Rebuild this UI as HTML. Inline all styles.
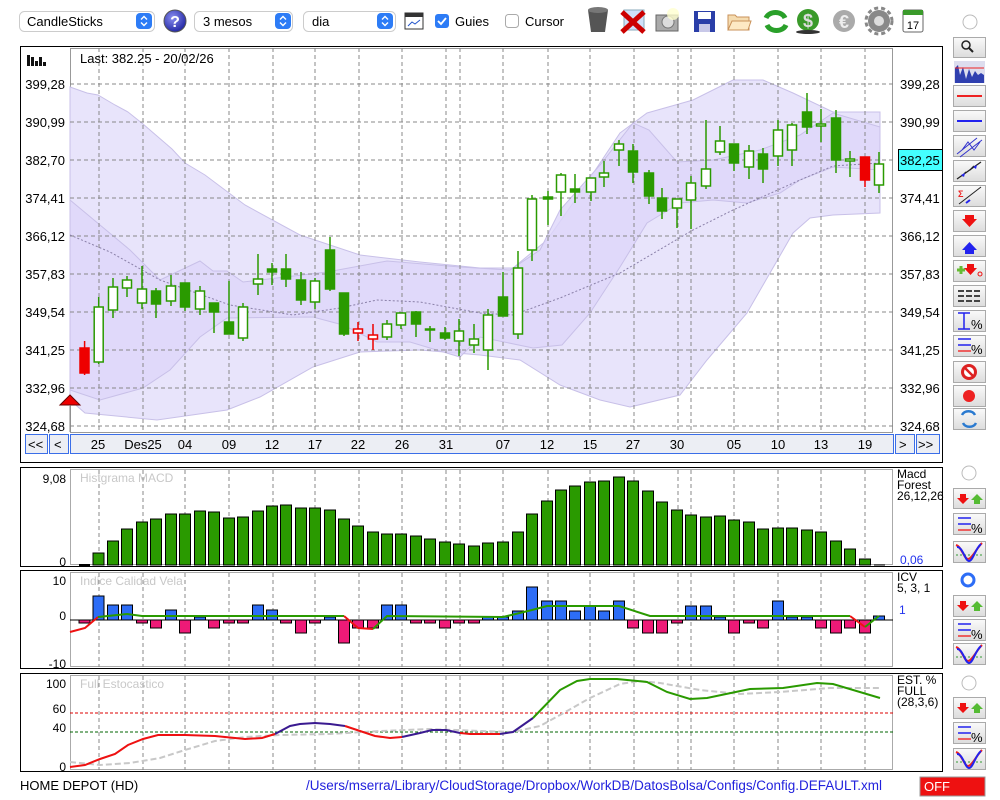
<!DOCTYPE html>
<html><head><meta charset="utf-8"><style>
html,body{margin:0;padding:0;background:#fff;width:1000px;height:800px;overflow:hidden;font-family:"Liberation Sans",sans-serif}
svg{display:block}
text{font-family:"Liberation Sans",sans-serif}
</style></head><body>
<svg width="1000" height="800" viewBox="0 0 1000 800" xmlns="http://www.w3.org/2000/svg">
<defs>
<linearGradient id="bt" x1="0" y1="0" x2="0" y2="1"><stop offset="0" stop-color="#fafafa"/><stop offset="1" stop-color="#dcdcdc"/></linearGradient>
<radialGradient id="q" cx="0.4" cy="0.35" r="0.7"><stop offset="0" stop-color="#8a8ef0"/><stop offset="1" stop-color="#1d22a0"/></radialGradient>
</defs>
<!-- Top toolbar -->
<g font-size="13">
<rect x="19.5" y="11.5" width="135" height="20" rx="5" fill="#fff" stroke="#ccc"/>
<text x="27" y="26">CandleSticks</text>
<rect x="136" y="13" width="16" height="16" rx="4" fill="#2d7cf6"/>
<path d="M141 19.5l3-3 3 3M141 22.5l3 3 3-3" stroke="#fff" stroke-width="1.4" fill="none"/>
<circle cx="175" cy="21" r="11" fill="url(#q)" stroke="#555"/>
<text x="175" y="27" font-size="16" font-weight="bold" fill="#fff" text-anchor="middle">?</text>
<rect x="194.5" y="11.5" width="98" height="20" rx="5" fill="#fff" stroke="#ccc"/>
<text x="203" y="26">3 mesos</text>
<rect x="275" y="13" width="16" height="16" rx="4" fill="#2d7cf6"/>
<path d="M280 19.5l3-3 3 3M280 22.5l3 3 3-3" stroke="#fff" stroke-width="1.4" fill="none"/>
<rect x="303.5" y="11.5" width="92" height="20" rx="5" fill="#fff" stroke="#ccc"/>
<text x="312" y="26">dia</text>
<rect x="377" y="13" width="16" height="16" rx="4" fill="#2d7cf6"/>
<path d="M382 19.5l3-3 3 3M382 22.5l3 3 3-3" stroke="#fff" stroke-width="1.4" fill="none"/>
<rect x="405" y="13" width="18" height="16" fill="#fff" stroke="#333"/><rect x="405" y="13" width="18" height="4" fill="#333"/>
<path d="M408 26l4-4 3 2 5-4" stroke="#2255cc" fill="none"/>
<rect x="435" y="14" width="14" height="14" rx="3" fill="#2d7cf6"/>
<path d="M438 21l3 3 5-6" stroke="#fff" stroke-width="1.8" fill="none"/>
<text x="455" y="26">Guies</text>
<rect x="505.5" y="14.5" width="13" height="13" rx="3" fill="#fff" stroke="#aaa"/>
<text x="525" y="26">Cursor</text>
</g>
<!-- toolbar icons -->
<path d="M588 10h20l-3 22h-14z" fill="#555"/><ellipse cx="598" cy="10" rx="10" ry="3" fill="#777"/>
<rect x="624" y="10" width="20" height="20" fill="#cfe0f8" stroke="#8ab"/><path d="M622 12l22 20M644 12l-22 20" stroke="#c00" stroke-width="5"/>
<rect x="656" y="15" width="22" height="16" fill="#aaa" stroke="#666"/><circle cx="668" cy="22" r="6" fill="#ddd" stroke="#777"/><circle cx="673" cy="14" r="6" fill="#ffffd0" opacity="0.8"/>
<rect x="694" y="11" width="21" height="21" fill="#2a3ea8"/><rect x="698" y="12" width="13" height="7" fill="#fff"/><rect x="699" y="24" width="11" height="8" fill="#c8c8e8"/>
<path d="M728 15h7l2 2h12v13h-21z" fill="#f5dcb0" stroke="#c9925a"/><path d="M728 30l4-9h19l-3 9z" fill="#fde9c4" stroke="#c9925a"/>
<path d="M766 18a10 8 0 0 1 19 0" stroke="#2aa02a" stroke-width="5" fill="none"/><path d="M786 25a10 8 0 0 1-19 0" stroke="#2aa02a" stroke-width="5" fill="none"/>
<circle cx="808" cy="20" r="11" fill="#3a9a2a"/><text x="808" y="27" font-size="18" font-weight="bold" fill="#ddd" text-anchor="middle">$</text><ellipse cx="808" cy="32" rx="12" ry="2" fill="#333"/>
<circle cx="844" cy="21" r="11" fill="#aaa"/><text x="844" y="28" font-size="18" font-weight="bold" fill="#eee" text-anchor="middle">€</text>
<circle cx="879" cy="21" r="11" fill="#888"/><circle cx="879" cy="21" r="5" fill="#ddd"/><circle cx="879" cy="21" r="13" fill="none" stroke="#888" stroke-width="3" stroke-dasharray="4 3"/>
<rect x="903" y="10" width="20" height="22" fill="#fff" stroke="#666" rx="2"/><rect x="903" y="10" width="20" height="5" fill="#3a9a2a"/><text x="913" y="29" font-size="11" text-anchor="middle">17</text>
<circle cx="970" cy="22" r="7" fill="#fff" stroke="#bbb"/>

<!-- Main panel -->
<rect x="20.5" y="46.5" width="922" height="416" fill="#fff" stroke="#000"/>
<rect x="70.5" y="48.5" width="822" height="384" fill="#fff" stroke="#999"/>
<polygon fill="#e8e4fb" stroke="#c8c0e8" points="70,87 87,93 98,95 115,105 128,112 143,124 172,149 185,163 205,175 229,193 245,205 300,235 360,255 420,262 480,268 513,268 547,240 580,193 620,133 647,113 693,100 733,80 763,80 793,93 833,112 880,112 880,213 833,215 810,218 793,233 747,313 707,360 680,395 630,407 600,400 560,385 520,360 480,355 420,350 360,352 313,367 260,397 227,410 157,420 85,413 70,400"/>
<polygon fill="#ddd6fa" fill-opacity="0.8" stroke="#c8c0e8" points="70,200 100,225 130,250 160,280 200,261 213,271 227,271 243,282 260,280 327,272 387,261 460,267 510,270 540,250 560,210 600,165 633,123 649,130 677,162 713,160 760,150 800,135 833,113 880,127 880,170 833,167 800,180 780,193 747,203 713,200 680,203 647,223 620,267 590,313 562,345 533,348 480,337 460,357 410,342 377,342 343,325 313,317 227,318 200,337 170,370 143,388 100,400 70,390"/>
<g stroke="#888" stroke-dasharray="4 3" stroke-width="1">
<path d="M70 84H893M70 122H893M70 160H893M70 198H893M70 236H893M70 274H893M70 312H893M70 350H893M70 388H893M70 426H893"/>
<path d="M99 48V432M143 48V432M185 48V432M229 48V432M273 48V432M315 48V432M359 48V432M402 48V432M446 48V432M460 48V432M503 48V432M548 48V432M590 48V432M634 48V432M678 48V432M691 48V432M734 48V432M778 48V432M821 48V432M865 48V432"/>
</g>
<polyline fill="none" stroke="#8a80a8" stroke-dasharray="2 2" points="70,235 110,252 160,280 230,305 293,315 340,308 377,300 420,302 480,313 513,315 560,298 620,273 693,230 733,210 800,180 833,166 880,163"/>
<g stroke-width="1.5">
<g stroke="#ee0000"><path d="M84.6 341V375"/><rect x="80" y="348" width="9" height="25" fill="#ee0000"/></g>
<g stroke="#2a9a00" fill="#fff">
<path d="M98.7 297V364M113 278V318M127 276V297M142 266V309M156 288V318M171 275V306M185 283V311M200 286V315M214 303V333M229 281V334M243 303V341M258 254V295M272 263V285M286 254V287M301 272V305M315 278V309M330 237V291M344 293V336M387 320V340M401 313V329M416 311V337M430 326V342M445 327V340M459 319V356M474 324V353M488 309V370M503 272V316M518 251V339M532 195V261M548 191V225M561 173V216M575 174V203M591 178V201M604 161V187M619 140V166M633 144V183M649 170V204M662 188V219M677 199V228M691 176V229M706 120V189M720 126V155M734 144V171M749 145V179M763 148V183M778 120V166M792 123V166M807 93V134M821 109V142M836 110V173M850 151V177M879 152V193"/>
<rect x="94.2" y="307" width="9" height="55"/><rect x="108.5" y="287" width="9" height="23"/><rect x="122.5" y="280" width="9" height="8"/><rect x="137.5" y="289" width="9" height="14"/>
<rect x="151.5" y="291" width="9" height="13" fill="#2a9a00"/><rect x="166.5" y="286" width="9" height="15"/><rect x="180.5" y="283" width="9" height="24" fill="#2a9a00"/>
<rect x="195.5" y="291" width="9" height="18"/><rect x="209.5" y="303" width="9" height="9" fill="#2a9a00"/><rect x="224.5" y="322" width="9" height="12" fill="#2a9a00"/>
<rect x="238.5" y="307" width="9" height="31"/><rect x="253.5" y="279" width="9" height="5"/><rect x="267.5" y="269" width="9" height="3" fill="#2a9a00"/>
<rect x="281.5" y="269" width="9" height="10" fill="#2a9a00"/><rect x="296.5" y="280" width="9" height="20" fill="#2a9a00"/><rect x="310.5" y="281" width="9" height="21"/>
<rect x="325.5" y="250" width="9" height="39" fill="#2a9a00"/><rect x="339.5" y="293" width="9" height="41" fill="#2a9a00"/>
<rect x="382.5" y="324" width="9" height="13"/><rect x="396.5" y="313" width="9" height="12"/><rect x="411.5" y="312" width="9" height="12" fill="#2a9a00"/>
<rect x="425.5" y="329" width="9" height="1" fill="#2a9a00"/><rect x="440.5" y="333" width="9" height="5" fill="#2a9a00"/><rect x="454.5" y="331" width="9" height="10"/>
<rect x="469.5" y="339" width="9" height="6"/><rect x="483.5" y="315" width="9" height="35"/><rect x="498.5" y="297" width="9" height="19" fill="#2a9a00"/>
<rect x="513.5" y="268" width="9" height="66"/><rect x="527.5" y="199" width="9" height="51"/><rect x="543.5" y="197" width="9" height="2" fill="#2a9a00"/>
<rect x="556.5" y="175" width="9" height="17"/><rect x="570.5" y="189" width="9" height="3" fill="#2a9a00"/><rect x="586.5" y="178" width="9" height="14"/>
<rect x="599.5" y="173" width="9" height="4"/><rect x="614.5" y="144" width="9" height="6"/><rect x="628.5" y="151" width="9" height="21" fill="#2a9a00"/>
<rect x="644.5" y="173" width="9" height="23" fill="#2a9a00"/><rect x="657.5" y="198" width="9" height="13" fill="#2a9a00"/><rect x="672.5" y="199" width="9" height="9"/>
<rect x="686.5" y="183" width="9" height="17"/><rect x="701.5" y="169" width="9" height="17"/><rect x="715.5" y="141" width="9" height="11"/>
<rect x="729.5" y="144" width="9" height="19" fill="#2a9a00"/><rect x="744.5" y="151" width="9" height="16"/><rect x="758.5" y="154" width="9" height="15" fill="#2a9a00"/>
<rect x="773.5" y="130" width="9" height="26"/><rect x="787.5" y="125" width="9" height="25"/><rect x="802.5" y="112" width="9" height="15" fill="#2a9a00"/>
<rect x="816.5" y="124" width="9" height="2"/><rect x="831.5" y="118" width="9" height="42" fill="#2a9a00"/><rect x="845.5" y="159" width="9" height="2"/>
<rect x="874.5" y="164" width="9" height="21"/>
</g>
<g stroke="#ee0000" fill="#fff"><path d="M358 322V341M373 324V350"/><rect x="353.5" y="329" width="9" height="4"/><rect x="368.5" y="335" width="9" height="4"/>
<path d="M865 157V187"/><rect x="860.5" y="157" width="9" height="23" fill="#ee0000"/></g>
</g>
<path d="M60 405L70 395 80 405Z" fill="#ee0000" stroke="#600"/><path d="M70 405V432" stroke="#888"/>
<g fill="#111"><rect x="27" y="55" width="3" height="11"/><rect x="31" y="57" width="3" height="9"/><rect x="35" y="61" width="3" height="5"/><rect x="39" y="57" width="3" height="9"/><rect x="43" y="62" width="3" height="4"/></g>
<text x="80" y="63" font-size="13">Last: 382.25 - 20/02/26</text>
<g font-size="13" text-anchor="end">
<text x="65" y="89">399,28</text><text x="65" y="127">390,99</text><text x="65" y="165">382,70</text><text x="65" y="203">374,41</text><text x="65" y="241">366,12</text><text x="65" y="279">357,83</text><text x="65" y="317">349,54</text><text x="65" y="355">341,25</text><text x="65" y="393">332,96</text><text x="65" y="431">324,68</text>
</g>
<g font-size="13">
<text x="900" y="89">399,28</text><text x="900" y="127">390,99</text><text x="900" y="203">374,41</text><text x="900" y="241">366,12</text><text x="900" y="279">357,83</text><text x="900" y="317">349,54</text><text x="900" y="355">341,25</text><text x="900" y="393">332,96</text><text x="900" y="431">324,68</text>
<rect x="898.5" y="149.5" width="44" height="21" fill="#44ffff" stroke="#000"/><text x="900" y="165">382,25</text>
</g>
<g font-size="13">
<rect x="25.5" y="434.5" width="22" height="19" fill="#eceef4" stroke="#3a6ee8"/><text x="28" y="449">&lt;&lt;</text>
<rect x="49.5" y="434.5" width="19" height="19" fill="#eceef4" stroke="#3a6ee8"/><text x="54" y="449">&lt;</text>
<rect x="70.5" y="434.5" width="823" height="19" fill="#eceef4" stroke="#3a6ee8"/>
<rect x="895.5" y="434.5" width="19" height="19" fill="#eceef4" stroke="#3a6ee8"/><text x="899" y="449">&gt;</text>
<rect x="916.5" y="434.5" width="23" height="19" fill="#eceef4" stroke="#3a6ee8"/><text x="918" y="449">&gt;&gt;</text>
<g text-anchor="middle"><text x="98" y="449">25</text><text x="143" y="449">Des25</text><text x="185" y="449">04</text><text x="229" y="449">09</text><text x="272" y="449">12</text><text x="315" y="449">17</text><text x="358" y="449">22</text><text x="402" y="449">26</text><text x="446" y="449">31</text><text x="503" y="449">07</text><text x="547" y="449">12</text><text x="590" y="449">15</text><text x="633" y="449">27</text><text x="677" y="449">30</text><text x="734" y="449">05</text><text x="778" y="449">10</text><text x="821" y="449">13</text><text x="865" y="449">19</text></g>
</g>

<g fill="#fff" stroke="#000"><rect x="20.5" y="467.5" width="922" height="99"/><rect x="20.5" y="570.5" width="922" height="98"/><rect x="20.5" y="673.5" width="922" height="98"/></g>
<g fill="none" stroke="#aaa"><rect x="70.5" y="469.5" width="822" height="95"/><rect x="70.5" y="572.5" width="822" height="94"/><rect x="70.5" y="675.5" width="822" height="94"/></g>
<g stroke="#888" stroke-dasharray="4 3">
<path d="M99 470V565M143 470V565M185 470V565M229 470V565M273 470V565M315 470V565M359 470V565M402 470V565M446 470V565M460 470V565M503 470V565M548 470V565M590 470V565M634 470V565M678 470V565M691 470V565M734 470V565M778 470V565M821 470V565M865 470V565"/>
<path d="M99 573V667M143 573V667M185 573V667M229 573V667M273 573V667M315 573V667M359 573V667M402 573V667M446 573V667M460 573V667M503 573V667M548 573V667M590 573V667M634 573V667M678 573V667M691 573V667M734 573V667M778 573V667M821 573V667M865 573V667"/>
<path d="M99 676V770M143 676V770M185 676V770M229 676V770M273 676V770M315 676V770M359 676V770M402 676V770M446 676V770M460 676V770M503 676V770M548 676V770M590 676V770M634 676V770M678 676V770M691 676V770M734 676V770M778 676V770M821 676V770M865 676V770"/>
</g>
<g font-size="12" fill="#c8c8c8"><text x="80" y="482">Histgrama MACD</text><text x="80" y="585">Indice Calidad Vela</text><text x="80" y="688">Full Estocastico</text></g>
<g font-size="12" text-anchor="end"><text x="66" y="483">9,08</text><text x="66" y="566">0</text><text x="66" y="585">10</text><text x="66" y="620">0</text><text x="66" y="668">-10</text><text x="66" y="688">100</text><text x="66" y="713">60</text><text x="66" y="732">40</text><text x="66" y="771">0</text></g>
<g font-size="12"><text x="897" y="478">Macd</text><text x="897" y="489">Forest</text><text x="897" y="500">26,12,26</text><text x="900" y="564" fill="#2233ee">0,06</text>
<text x="897" y="581">ICV</text><text x="897" y="592">5, 3, 1</text><text x="899" y="614" fill="#2233ee">1</text>
<text x="897" y="684">EST. %</text><text x="897" y="695">FULL</text><text x="897" y="706">(28,3,6)</text></g>
<g fill="#2a9a00" stroke="#000" stroke-width="1">
<path d="M79 565H90" stroke-width="2"/>
<rect x="93" y="553" width="11" height="12"/><rect x="107.5" y="541" width="11" height="24"/><rect x="121.5" y="529" width="11" height="36"/><rect x="136.5" y="522" width="11" height="43"/><rect x="150.5" y="519" width="11" height="46"/><rect x="165.5" y="514" width="11" height="51"/><rect x="179.5" y="514" width="11" height="51"/><rect x="194.5" y="511" width="11" height="54"/><rect x="208.5" y="512" width="11" height="53"/><rect x="223.5" y="518" width="11" height="47"/><rect x="237.5" y="517" width="11" height="48"/><rect x="252.5" y="511" width="11" height="54"/><rect x="266.5" y="506" width="11" height="59"/><rect x="280.5" y="505" width="11" height="60"/><rect x="295.5" y="508" width="11" height="57"/><rect x="309.5" y="508" width="11" height="57"/><rect x="324.5" y="510" width="11" height="55"/><rect x="338.5" y="519" width="11" height="46"/><rect x="352.5" y="526" width="11" height="39"/><rect x="367.5" y="532" width="11" height="33"/><rect x="381.5" y="534" width="11" height="31"/><rect x="395.5" y="534" width="11" height="31"/><rect x="410.5" y="536" width="11" height="29"/><rect x="424.5" y="539" width="11" height="26"/><rect x="439.5" y="542" width="11" height="23"/><rect x="453.5" y="544" width="11" height="21"/><rect x="468.5" y="546" width="11" height="19"/><rect x="482.5" y="543" width="11" height="22"/><rect x="497.5" y="542" width="11" height="23"/><rect x="512.5" y="532" width="11" height="33"/><rect x="526.5" y="514" width="11" height="51"/><rect x="541.5" y="501" width="11" height="64"/><rect x="555.5" y="490" width="11" height="75"/><rect x="569.5" y="486" width="11" height="79"/><rect x="584.5" y="482" width="11" height="83"/><rect x="598.5" y="481" width="11" height="84"/><rect x="613.5" y="477" width="11" height="88"/><rect x="627.5" y="481" width="11" height="84"/><rect x="642.5" y="491" width="11" height="74"/><rect x="656.5" y="502" width="11" height="63"/><rect x="671.5" y="510" width="11" height="55"/><rect x="685.5" y="515" width="11" height="50"/><rect x="700.5" y="517" width="11" height="48"/><rect x="714.5" y="516" width="11" height="49"/><rect x="728.5" y="520" width="11" height="45"/><rect x="743.5" y="522" width="11" height="43"/><rect x="757.5" y="529" width="11" height="36"/><rect x="772.5" y="528" width="11" height="37"/><rect x="786.5" y="528" width="11" height="37"/><rect x="801.5" y="530" width="11" height="35"/><rect x="815.5" y="532" width="11" height="33"/><rect x="830.5" y="541" width="11" height="24"/><rect x="844.5" y="549" width="11" height="16"/><rect x="859.5" y="559" width="11" height="6"/>
<path d="M874 565H885"/>
</g>
<g stroke="#000" stroke-width="1">
<g fill="#2d6df6">
<rect x="93" y="596" width="11" height="24"/><rect x="107.5" y="605" width="11" height="15"/><rect x="121.5" y="605" width="11" height="15"/><rect x="165.5" y="610" width="11" height="10"/><rect x="194.5" y="617" width="11" height="3"/><rect x="252.5" y="605" width="11" height="15"/><rect x="266.5" y="610" width="11" height="10"/><rect x="324.5" y="617" width="11" height="3"/><rect x="381.5" y="605" width="11" height="15"/><rect x="395.5" y="605" width="11" height="15"/><rect x="482.5" y="617" width="11" height="3"/><rect x="497.5" y="617" width="11" height="3"/><rect x="512.5" y="611" width="11" height="9"/><rect x="526.5" y="587" width="11" height="33"/><rect x="541.5" y="601" width="11" height="19"/><rect x="555.5" y="601" width="11" height="19"/><rect x="569.5" y="611" width="11" height="9"/><rect x="584.5" y="606" width="11" height="14"/><rect x="598.5" y="611" width="11" height="9"/><rect x="613.5" y="601" width="11" height="19"/><rect x="685.5" y="606" width="11" height="14"/><rect x="700.5" y="606" width="11" height="14"/><rect x="714.5" y="617" width="11" height="3"/><rect x="772.5" y="601" width="11" height="19"/><rect x="786.5" y="617" width="11" height="3"/><rect x="801.5" y="617" width="11" height="3"/><rect x="873.5" y="616" width="11" height="4"/>
</g>
<g fill="#ee1a77">
<rect x="79" y="620" width="11" height="3"/><rect x="136.5" y="620" width="11" height="3"/><rect x="150.5" y="620" width="11" height="8"/><rect x="179.5" y="620" width="11" height="13"/><rect x="208.5" y="620" width="11" height="8"/><rect x="223.5" y="620" width="11" height="3"/><rect x="237.5" y="620" width="11" height="3"/><rect x="280.5" y="620" width="11" height="3"/><rect x="295.5" y="620" width="11" height="13"/><rect x="309.5" y="620" width="11" height="3"/><rect x="338.5" y="620" width="11" height="23"/><rect x="352.5" y="620" width="11" height="8"/><rect x="367.5" y="620" width="11" height="8"/><rect x="410.5" y="620" width="11" height="3"/><rect x="424.5" y="620" width="11" height="3"/><rect x="439.5" y="620" width="11" height="8"/><rect x="453.5" y="620" width="11" height="3"/><rect x="468.5" y="620" width="11" height="3"/><rect x="627.5" y="620" width="11" height="8"/><rect x="642.5" y="620" width="11" height="13"/><rect x="656.5" y="620" width="11" height="13"/><rect x="671.5" y="620" width="11" height="3"/><rect x="728.5" y="620" width="11" height="13"/><rect x="743.5" y="620" width="11" height="3"/><rect x="757.5" y="620" width="11" height="8"/><rect x="815.5" y="620" width="11" height="8"/><rect x="830.5" y="620" width="11" height="13"/><rect x="844.5" y="620" width="11" height="8"/><rect x="859.5" y="620" width="11" height="13"/>
</g>
</g>
<path d="M70 620H893" stroke="#000"/>
<g fill="none" stroke-width="2">
<polyline stroke="#ee1111" points="70,632 85,628 98,617"/>
<polyline stroke="#2a9a00" points="98,617 127,614 142,616 344,616"/>
<polyline stroke="#ee1111" points="344,616 358,628 373,629"/>
<polyline stroke="#2a9a00" points="373,629 387,616 503,617 532,610 547,606 619,606 650,616 850,616"/>
<polyline stroke="#ee1111" points="850,616 865,627"/>
<polyline stroke="#2a9a00" points="865,627 879,616"/>
</g>
<path d="M70 713H893" stroke="#dd0000" stroke-dasharray="3 2"/>
<path d="M70 732H893" stroke="#006600" stroke-dasharray="3 2"/>
<polyline fill="none" stroke="#c8c8c8" stroke-width="2" stroke-dasharray="6 3" points="70,762 100,765 130,763 160,758 185,750 215,741 245,737 280,735 330,734 380,731 430,729 480,731 513,732 540,726 560,715 590,698 620,684 640,681 660,683 700,690 740,694 780,692 830,688 880,688"/>
<g fill="none" stroke-width="2">
<polyline stroke="#ee1111" points="70,767 85,765 100,759 115,754 128,745 143,739 158,735 185,735 215,736 245,739 262,738 275,734"/>
<polyline stroke="#3a1a90" points="275,734 290,726 300,724 315,723 330,724 345,726"/>
<polyline stroke="#ee1111" points="345,726 360,731 375,736 390,738 402,737"/>
<polyline stroke="#3a1a90" points="402,737 420,733 432,730 446,730 460,733"/>
<polyline stroke="#ee1111" points="460,733 470,734 500,734"/>
<polyline stroke="#3a1a90" points="500,734 513,732 533,718"/>
<polyline stroke="#2a9a00" points="533,718 560,690 577,681 590,679 617,679 647,682 667,692 690,699 707,698 750,689 783,688 817,683 833,684 880,698"/>
</g>
<text x="20" y="790" font-size="13">HOME DEPOT (HD)</text>
<text x="306" y="790" font-size="13.5" fill="#2222dd" textLength="576" lengthAdjust="spacingAndGlyphs">/Users/mserra/Library/CloudStorage/Dropbox/WorkDB/DatosBolsa/Configs/Config.DEFAULT.xml</text>
<rect x="920" y="777" width="65" height="19" fill="#ee1111" stroke="#999"/>
<text x="924" y="791" font-size="13" fill="#fff">OFF</text>

<g fill="url(#bt)" stroke="#aaa">
<rect x="953.5" y="37.5" width="32" height="20"/><rect x="953.5" y="85.5" width="32" height="21"/><rect x="953.5" y="110.5" width="32" height="21"/><rect x="953.5" y="135.5" width="32" height="21"/><rect x="953.5" y="160.5" width="32" height="21"/><rect x="953.5" y="185.5" width="32" height="21"/><rect x="953.5" y="210.5" width="32" height="21"/><rect x="953.5" y="235.5" width="32" height="21"/><rect x="953.5" y="260.5" width="32" height="21"/><rect x="953.5" y="285.5" width="32" height="21"/><rect x="953.5" y="310.5" width="32" height="21"/><rect x="953.5" y="335.5" width="32" height="21"/><rect x="953.5" y="361.5" width="32" height="21"/><rect x="953.5" y="385.5" width="32" height="21"/><rect x="953.5" y="408.5" width="32" height="21"/>
<rect x="953.5" y="488.5" width="32" height="20"/><rect x="953.5" y="513.5" width="32" height="21"/><rect x="953.5" y="541.5" width="32" height="21"/>
<rect x="953.5" y="595.5" width="32" height="21"/><rect x="953.5" y="619.5" width="32" height="21"/><rect x="953.5" y="643.5" width="32" height="21"/>
<rect x="953.5" y="697.5" width="32" height="21"/><rect x="953.5" y="722.5" width="32" height="21"/><rect x="953.5" y="748.5" width="32" height="21"/>
</g>
<circle cx="966" cy="45" r="4" fill="none" stroke="#222" stroke-width="1.5"/><path d="M969 48l4 4" stroke="#222" stroke-width="2"/>
<rect x="954" y="61" width="31" height="22" fill="#dde"/><path d="M955 83V68l3-3 2 10 3-8 3 12 3-10 3 8 3-6 3 4 3-2 3 2V83Z" fill="#3040b0"/><path d="M955 68h29" stroke="#e22" stroke-width="1"/>
<path d="M957 96H982" stroke="#e22" stroke-width="2"/><path d="M957 121H982" stroke="#22e" stroke-width="2"/>
<path d="M957 154l20-16M960 157l22-17M962 150l6-8 6 8 6-8" stroke="#33c" fill="none"/>
<path d="M957 179l24-17M962 176l4-4M970 170l4-4" stroke="#222" stroke-width="1.3" fill="none"/><path d="M961 175l4-2-1 4zM973 167l4-2-1 4z" fill="#22e"/>
<path d="M959 204l22-17" stroke="#222"/><text x="958" y="197" font-size="9" fill="#e22" font-weight="bold">Σ</text><path d="M966 203l4-3" stroke="#22e" stroke-width="2"/>
<path d="M965 215h9v4h3l-7.5 8-7.5-8h3z" fill="#e11"/>
<path d="M965 254h9v-4h3l-7.5-8-7.5 8h3z" fill="#22e"/>
<path d="M957 270h8M961 266v8" stroke="#6b3" stroke-width="3"/><path d="M967 264h7v4h3l-6.5 7-6.5-7h3z" fill="#e11"/><circle cx="980" cy="274" r="2" fill="none" stroke="#e11"/>
<path d="M958 291h24M958 296h24M958 301h24" stroke="#444" stroke-width="2" stroke-dasharray="6 2"/>
<path d="M958 313h12M958 329h12M964 313v16" stroke="#22e" stroke-width="1.5"/><text x="971" y="329" font-size="13">%</text>
<path d="M958 339h13M958 345h13" stroke="#22e" stroke-width="1.5"/><path d="M958 351h13" stroke="#e33" stroke-width="1.5"/><text x="971" y="354" font-size="13">%</text>
<circle cx="969" cy="372" r="8" fill="#dd2222"/><circle cx="969" cy="372" r="5" fill="#fff"/><path d="M965 368l8 8" stroke="#dd2222" stroke-width="2.5"/>
<circle cx="969" cy="396" r="6" fill="#ee2222"/>
<path d="M962 415a7 6 0 0 1 13 0M976 423a7 6 0 0 1-13 0" stroke="#2a7ad0" stroke-width="2.5" fill="none"/>
<circle cx="969" cy="473" r="7" fill="#fff" stroke="#bbb"/>
<circle cx="968" cy="580" r="6" fill="#fff" stroke="#2d6df6" stroke-width="3"/>
<circle cx="969" cy="683" r="7" fill="#fff" stroke="#bbb"/>
<g><path d="M960 494h6v4h3l-6 6-6-6h3z" fill="#e11"/><path d="M974 504h6v-4h3l-6-6-6 6h3z" fill="#5b3"/></g>
<g transform="translate(0,107)"><path d="M960 494h6v4h3l-6 6-6-6h3z" fill="#e11"/><path d="M974 504h6v-4h3l-6-6-6 6h3z" fill="#5b3"/></g>
<g transform="translate(0,209)"><path d="M960 494h6v4h3l-6 6-6-6h3z" fill="#e11"/><path d="M974 504h6v-4h3l-6-6-6 6h3z" fill="#5b3"/></g>
<g><path d="M958 518h13M958 524h13" stroke="#22e" stroke-width="1.5"/><path d="M958 530h13" stroke="#e33" stroke-width="1.5"/><text x="971" y="533" font-size="13">%</text></g>
<g transform="translate(0,106)"><path d="M958 518h13M958 524h13" stroke="#22e" stroke-width="1.5"/><path d="M958 530h13" stroke="#e33" stroke-width="1.5"/><text x="971" y="533" font-size="13">%</text></g>
<g transform="translate(0,209)"><path d="M958 518h13M958 524h13" stroke="#22e" stroke-width="1.5"/><path d="M958 530h13" stroke="#e33" stroke-width="1.5"/><text x="971" y="533" font-size="13">%</text></g>
<g><path d="M956 555h28" stroke="#393" stroke-dasharray="2 2"/><path d="M956 545c6 2 8 14 12 14s8-10 14-16" stroke="#e22" stroke-width="2" fill="none"/><path d="M957 547c6 0 8 14 12 14s6-12 12-17" stroke="#22e" stroke-width="2" fill="none"/></g>
<g transform="translate(0,102)"><path d="M956 555h28" stroke="#393" stroke-dasharray="2 2"/><path d="M956 545c6 2 8 14 12 14s8-10 14-16" stroke="#e22" stroke-width="2" fill="none"/><path d="M957 547c6 0 8 14 12 14s6-12 12-17" stroke="#22e" stroke-width="2" fill="none"/></g>
<g transform="translate(0,207)"><path d="M956 555h28" stroke="#393" stroke-dasharray="2 2"/><path d="M956 545c6 2 8 14 12 14s8-10 14-16" stroke="#e22" stroke-width="2" fill="none"/><path d="M957 547c6 0 8 14 12 14s6-12 12-17" stroke="#22e" stroke-width="2" fill="none"/></g>
</svg>
</body></html>
